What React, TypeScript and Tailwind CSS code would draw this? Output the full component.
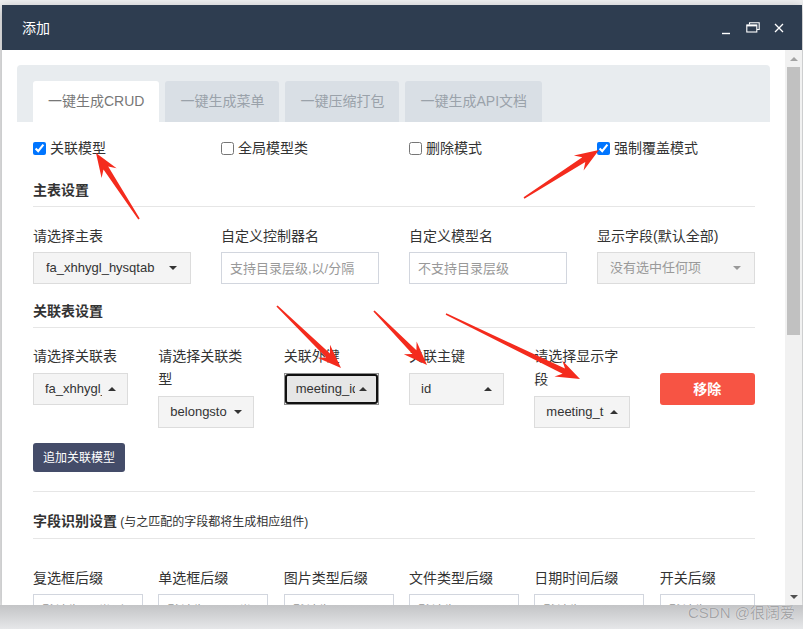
import React from "react";

const FONT = "font-['Liberation_Sans','Noto_Sans_CJK_SC',sans-serif]";

function Caret({ up, color = "dark" }: { up?: boolean; color?: "dark" | "light" }) {
  if (up) {
    return <span className="shrink-0 border-x-[4px] border-x-transparent border-b-[4px] border-b-[#333]" />;
  }
  return color === "light" ? (
    <span className="shrink-0 border-x-[4px] border-x-transparent border-t-[4px] border-t-[#999]" />
  ) : (
    <span className="shrink-0 border-x-[4px] border-x-transparent border-t-[4px] border-t-[#333]" />
  );
}

function SmallSelect({ text, up }: { text: string; up?: boolean }) {
  return (
    <div className="flex h-[32px] w-full items-center border border-[#dcdcdc] bg-[#f4f4f4] pl-[11px] pr-[11px] text-[13px] leading-[32px] text-[#333]">
      <span className="flex-1 overflow-hidden whitespace-nowrap">{text}</span>
      <span className="ml-[6px] flex">
        <Caret up={up} />
      </span>
    </div>
  );
}

function Label({ children }: { children: React.ReactNode }) {
  return <div className="mb-[6px] text-[14px] leading-[20px] text-[#333]">{children}</div>;
}

function Input({ placeholder, wide }: { placeholder: string; wide?: boolean }) {
  return (
    <input
      readOnly
      placeholder={placeholder}
      className={
        wide
          ? "h-[32px] w-[110px] border border-[#d2d6de] bg-white px-[8px] text-[13px] outline-none placeholder:text-[#999]"
          : "h-[32px] w-full border border-[#d2d6de] bg-white px-[8px] text-[13px] outline-none placeholder:text-[#999]"
      }
    />
  );
}

function Check({ label, checked }: { label: string; checked?: boolean }) {
  return (
    <label className="flex h-[20px] items-center gap-[4px] text-[14px] leading-[20px] text-[#333]">
      <input type="checkbox" defaultChecked={checked} className="m-0 h-[13px] w-[13px]" />
      <span>{label}</span>
    </label>
  );
}

function arrowPoints(x1: number, y1: number, x2: number, y2: number) {
  const dx = x2 - x1;
  const dy = y2 - y1;
  const len = Math.hypot(dx, dy);
  const ux = dx / len;
  const uy = dy / len;
  const nx = -uy;
  const ny = ux;
  const H = 24;
  const W = 9;
  const neck = 18;
  const p = (d: number, w: number) => `${(x1 + ux * d + nx * w).toFixed(1)},${(y1 + uy * d + ny * w).toFixed(1)}`;
  return [p(0, 0.8), p(len - neck, 2.8), p(len - H, W), p(len, 0), p(len - H, -W), p(len - neck, -2.8), p(0, -0.8)].join(" ");
}

const arrows = [
  [139, 219, 96, 153],
  [524, 198, 599, 150],
  [277, 306, 341, 368],
  [374, 311, 427, 365],
  [446, 314, 580, 379],
];

const tabs = ["一键生成菜单", "一键压缩打包", "一键生成API文档"];

export default function App() {
  return (
    <div className={`relative h-[629px] w-[803px] overflow-hidden bg-[#eeeff0] ${FONT}`}>
      <div className="flex h-full flex-col">
        <div className="ml-[2px] mt-[5px] flex h-[600px] w-[800px] flex-col bg-white shadow-[0_3px_10px_rgba(0,0,0,0.3)]">
          {/* title bar */}
          <div className="flex h-[45px] shrink-0 items-center bg-[#2e3d50] pl-[20px] pr-[18px] text-white">
            <span className="text-[14px] leading-[20px]">添加</span>
            <div className="ml-auto flex items-center">
              <svg width="10" height="10" viewBox="0 0 10 10" className="mt-[4px]">
                <path d="M1 8.5H9" stroke="#fff" strokeWidth="1.4" />
              </svg>
              <svg width="14" height="11" viewBox="0 0 14 11" className="ml-[15px]">
                <path d="M3.5 2.5V0.8H13.2V7.5H11" fill="none" stroke="#fff" strokeWidth="1.1" />
                <rect x="0.8" y="3" width="10" height="7" fill="none" stroke="#fff" strokeWidth="1.1" />
                <path d="M0.8 3.6H10.8" stroke="#fff" strokeWidth="1.6" />
              </svg>
              <svg width="10" height="10" viewBox="0 0 10 10" className="ml-[14px]">
                <path d="M1 1L9 9M9 1L1 9" stroke="#fff" strokeWidth="1.3" />
              </svg>
            </div>
          </div>

          <div className="flex min-h-0 flex-1">
            <div className="min-w-0 flex-1 overflow-hidden pl-[15px] pr-[15px] pt-[15px]">
              {/* tab bar */}
              <div className="flex gap-[6px] rounded-t-[4px] bg-[#e8ecef] pl-[16px] pt-[16px]">
                <div className="h-[41px] rounded-t-[3px] bg-white px-[15px] text-[14px] leading-[41px] text-[#777]">
                  一键生成CRUD
                </div>
                {tabs.map((t) => (
                  <div key={t} className="h-[41px] rounded-t-[3px] bg-[#d9dfe5] px-[15px] text-[14px] leading-[41px] text-[#9aa2aa]">
                    {t}
                  </div>
                ))}
              </div>

              <div className="pl-[16px] pr-[15px]">
                {/* options */}
                <div className="mt-[16px] grid grid-cols-4 gap-x-[30px]">
                  <Check label="关联模型" checked />
                  <Check label="全局模型类" />
                  <Check label="删除模式" />
                  <Check label="强制覆盖模式" checked />
                </div>

                {/* main table */}
                <div className="mt-[21px] border-b border-[#e6e6e6] pb-[5px] text-[14px] font-bold leading-[22px] text-[#333]">
                  主表设置
                </div>
                <div className="mt-[19px] grid grid-cols-4 gap-x-[30px]">
                  <div>
                    <Label>请选择主表</Label>
                    <div className="flex h-[32px] items-center border border-[#dcdcdc] bg-[#f4f4f4] pl-[12px] pr-[13px] text-[13px] leading-[32px] text-[#333]">
                      <span className="flex-1 overflow-hidden whitespace-nowrap">fa_xhhygl_hysqtab</span>
                      <Caret />
                    </div>
                  </div>
                  <div>
                    <Label>自定义控制器名</Label>
                    <Input placeholder="支持目录层级,以/分隔" />
                  </div>
                  <div>
                    <Label>自定义模型名</Label>
                    <Input placeholder="不支持目录层级" />
                  </div>
                  <div>
                    <Label>显示字段(默认全部)</Label>
                    <div className="flex h-[32px] items-center border border-[#dcdcdc] bg-[#f4f4f4] pl-[12px] pr-[13px] text-[13px] leading-[32px] text-[#999]">
                      <span className="flex-1 overflow-hidden whitespace-nowrap">没有选中任何项</span>
                      <Caret color="light" />
                    </div>
                  </div>
                </div>

                {/* relation */}
                <div className="mt-[16px] border-b border-[#e6e6e6] pb-[5px] text-[14px] font-bold leading-[22px] text-[#333]">
                  关联表设置
                </div>
                <div className="mt-[17px] grid grid-cols-6 gap-x-[30px]">
                  <div>
                    <div className="mb-[5px] text-[14px] leading-[23px] text-[#333]">请选择关联表</div>
                    <SmallSelect text="fa_xhhygl_hysqtab" up />
                  </div>
                  <div>
                    <div className="mb-[5px] text-[14px] leading-[23px] text-[#333]">请选择关联类型</div>
                    <SmallSelect text="belongsto" />
                  </div>
                  <div>
                    <div className="mb-[5px] text-[14px] leading-[23px] text-[#333]">关联外键</div>
                    <div className="h-[32px] border border-[#8f8f8f]">
                      <div className="flex h-full items-center rounded-[3px] border-2 border-[#111] bg-[#e6e6e6] pl-[9px] pr-[9px] text-[13px] text-[#333]">
                        <span className="flex-1 overflow-hidden whitespace-nowrap">meeting_id</span>
                        <span className="ml-[4px] flex">
                          <Caret up />
                        </span>
                      </div>
                    </div>
                  </div>
                  <div>
                    <div className="mb-[5px] text-[14px] leading-[23px] text-[#333]">关联主键</div>
                    <SmallSelect text="id" up />
                  </div>
                  <div>
                    <div className="mb-[5px] text-[14px] leading-[23px] text-[#333]">请选择显示字段</div>
                    <SmallSelect text="meeting_title" up />
                  </div>
                  <div>
                    <button className="mt-[28px] h-[32px] w-full rounded-[3px] bg-[#f75444] text-[14px] font-bold text-white">
                      移除
                    </button>
                  </div>
                </div>

                <button className="mt-[15px] h-[29px] rounded-[3px] bg-[#444c69] px-[10px] text-[12px] text-white">
                  追加关联模型
                </button>

                <div className="mt-[19px] border-t border-[#e6e6e6]" />

                {/* field identification */}
                <div className="mt-[18px] border-b border-[#e6e6e6] pb-[5px] leading-[22px] text-[#333]">
                  <span className="text-[14px] font-bold">字段识别设置</span>
                  <span className="text-[12px]"> (与之匹配的字段都将生成相应组件)</span>
                </div>
                <div className="mt-[29px] grid grid-cols-6 gap-x-[30px]">
                  <div>
                    <Label>复选框后缀</Label>
                    <Input placeholder="默认为set类型" wide />
                  </div>
                  <div>
                    <Label>单选框后缀</Label>
                    <Input placeholder="默认为enum类型" wide />
                  </div>
                  <div>
                    <Label>图片类型后缀</Label>
                    <Input placeholder="默认为image,images" wide />
                  </div>
                  <div>
                    <Label>文件类型后缀</Label>
                    <Input placeholder="默认为file,files" wide />
                  </div>
                  <div>
                    <Label>日期时间后缀</Label>
                    <Input placeholder="默认为time" wide />
                  </div>
                  <div>
                    <Label>开关后缀</Label>
                    <Input placeholder="默认为switch" />
                  </div>
                </div>
              </div>
            </div>

            {/* scrollbar */}
            <div className="flex w-[17px] shrink-0 flex-col bg-[#f1f1f1]">
              <div className="flex h-[17px] items-center justify-center">
                <span className="border-x-[4px] border-x-transparent border-b-[4px] border-b-[#a3a3a3]" />
              </div>
              <div className="mx-[2px] h-[268px] bg-[#c1c1c1]" />
              <div className="flex-1" />
              <div className="flex h-[17px] items-center justify-center">
                <span className="border-x-[4px] border-x-transparent border-t-[4px] border-t-[#505050]" />
              </div>
            </div>
          </div>
        </div>
        <div className="flex-1 bg-gradient-to-b from-[#c3c4c6] to-[#e6e7e9]" />
      </div>

      {/* annotation arrows */}
      <svg className="pointer-events-none absolute left-0 top-0" width="803" height="629">
        {arrows.map(([a, b, c, d], i) => (
          <polygon key={i} points={arrowPoints(a, b, c, d)} fill="#f42b1d" />
        ))}
      </svg>

      <div className="absolute left-[688px] top-[603px] text-[15px] leading-[20px] text-[#a3a4a6] [text-shadow:0_0_1px_rgba(255,255,255,0.9)]">
        CSDN @很阔爱
      </div>
    </div>
  );
}
